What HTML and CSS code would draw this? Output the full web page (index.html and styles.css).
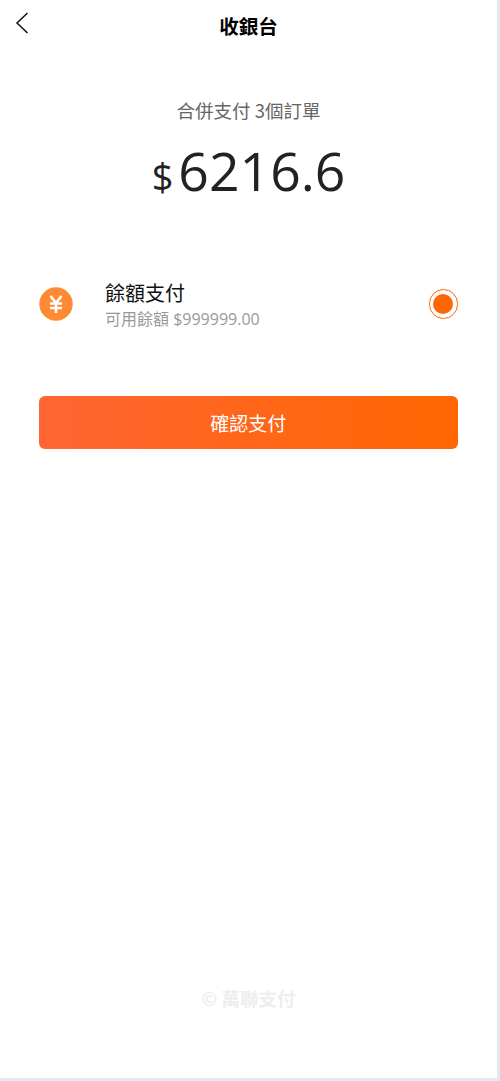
FILE: index.html
```html
<!DOCTYPE html>
<html lang="zh-Hant">
<head>
<meta charset="utf-8">
<title>收銀台</title>
<link rel="stylesheet" href="styles.css">
</head>
<body>
<main class="app">
  <header class="nav">
    <svg class="back" width="14" height="22" viewBox="0 0 14 22"><path d="M12.5 1 L2 11 L12.5 21" fill="none" stroke="#111" stroke-width="1.5"/></svg>
    <h1 class="title">收銀台</h1>
  </header>
  <section class="summary">
    <p class="orders">合併支付 3個訂單</p>
    <p class="amount"><span class="currency">$</span>6216.6</p>
  </section>
  <section class="method">
    <svg class="coin" width="34" height="34" viewBox="0 0 34 34"><circle cx="17" cy="17" r="16.75" fill="#ff8a33"/><path d="M11.5 9 L17 16 L22.5 9 M11 16.5 H23 M11 21 H23 M17 16 V26" fill="none" stroke="#fff" stroke-width="2.6"/></svg>
    <div class="method-text">
      <div class="method-name">餘額支付</div>
      <div class="method-balance">可用餘額 $999999.00</div>
    </div>
    <span class="radio"><span class="radio-dot"></span></span>
  </section>
  <button class="pay">確認支付</button>
  <footer class="foot">© 萬聯支付</footer>
</main>
</body>
</html>
```
FILE: styles.css
```css
* { box-sizing: border-box; }
html, body { margin: 0; height: 100%; }
body { background: #e4e8f0; overflow: hidden; font-family: "Open Sans", "Noto Sans CJK TC", sans-serif; }
.app { width: 497px; height: 1078px; background: #fff; display: flex; flex-direction: column; padding: 0 39px; }
.nav { height: 54px; margin: 0 -39px; position: relative; display: flex; justify-content: center; }
.back { position: absolute; left: 15px; top: 12px; }
.title { margin: 16px 0 0; font-size: 19.5px; line-height: 20px; font-weight: 700; color: #000; font-family: "Noto Sans CJK TC", sans-serif; }
.summary { text-align: center; }
.orders { margin: 43px 0 0; font-size: 18.5px; line-height: 26px; color: #666; font-family: "Noto Sans CJK TC", sans-serif; }
.amount { margin: 13px 0 0; font-size: 53.5px; line-height: 70px; color: #222; }
.currency { font-size: 38px; margin-right: 5px; }
.method { display: flex; align-items: center; margin-top: 63px; height: 60px; }
.method-text { margin-left: 32px; flex: 1; }
.method-name { font-size: 20px; line-height: 26px; color: #111; font-family: "Noto Sans CJK TC", sans-serif; }
.method-balance { margin-top: 3px; font-size: 16px; line-height: 20px; color: #999; font-family: "Open Sans", "Noto Sans CJK TC", sans-serif; }
.radio { width: 29.5px; height: 29.5px; border: 1.5px solid #ff6600; border-radius: 50%; display: flex; align-items: center; justify-content: center; }
.radio-dot { width: 20px; height: 20px; border-radius: 50%; background: #ff6600; }
.pay { margin-top: 62px; height: 52.5px; width: 418.5px; border: 0; border-radius: 6px; background: linear-gradient(90deg, #ff6633, #ff6600); color: #fff; font-size: 19px; font-family: "Noto Sans CJK TC", sans-serif; }
.foot { margin-top: auto; margin-bottom: 68px; text-align: center; font-size: 18.5px; line-height: 24px; font-weight: 700; color: #eee; font-family: "Noto Sans CJK TC", sans-serif; }
```
